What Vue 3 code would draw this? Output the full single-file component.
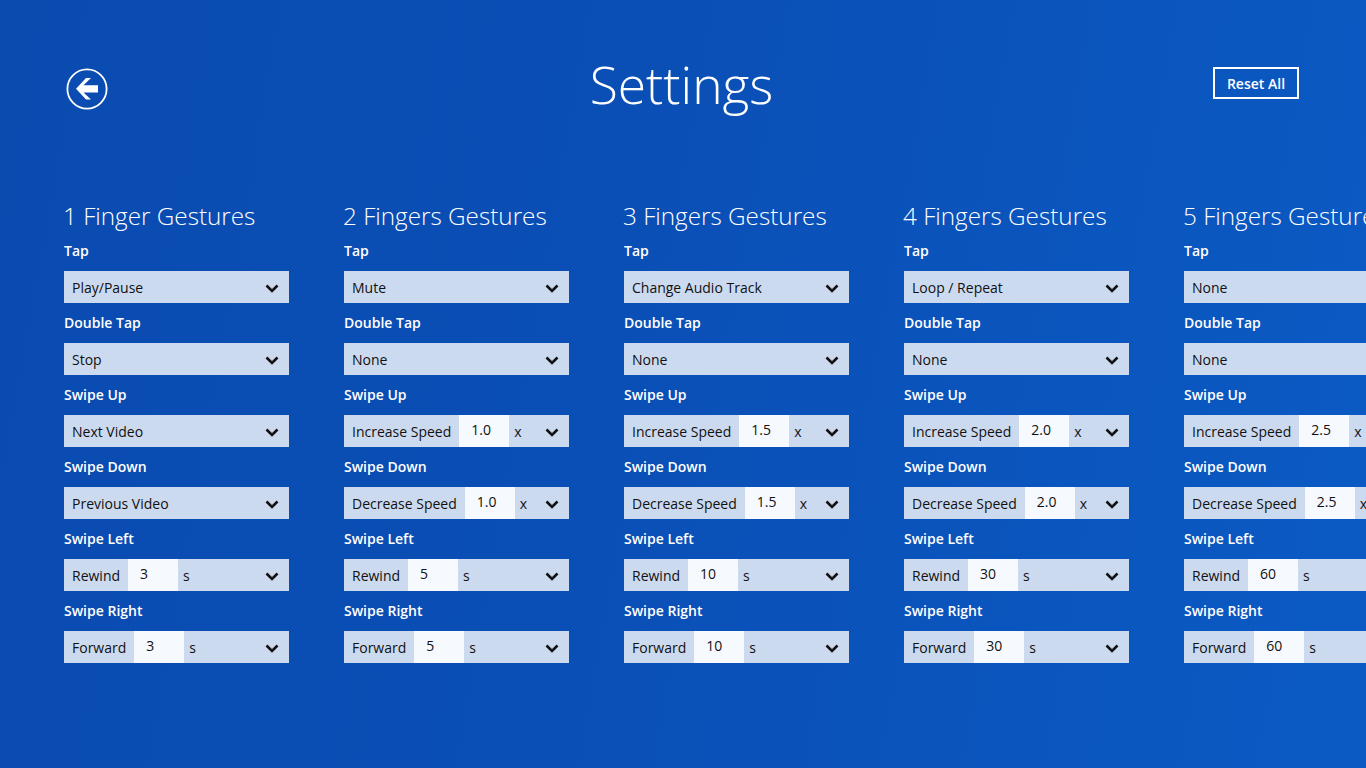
<template>
  <div class="page">
    <header class="top-bar">
      <button class="back-btn" aria-label="Back">
        <svg width="42" height="42" viewBox="0 0 42 42">
          <circle cx="21" cy="21" r="19.6" fill="none" stroke="#fff" stroke-width="1.8" />
          <path d="M10 20.8 L20 10 L25 10 L17.5 17.2 H32 V24.5 H17.5 L25 31.5 L20 31.5 Z" fill="#fff" />
        </svg>
      </button>
      <h1 class="title">Settings</h1>
      <button class="reset-btn">Reset All</button>
    </header>

    <main class="columns">
      <section v-for="col in columns" :key="col.title" class="column">
        <h2 class="column-title">{{ col.title }}</h2>
        <div v-for="row in col.rows" :key="row.gesture" class="field">
          <div class="field-label">{{ row.gesture }}</div>
          <div class="select">
            <span class="select-text">{{ row.action }}</span>
            <span v-if="row.value" class="select-input">{{ row.value }}</span>
            <span v-if="row.unit" class="select-unit">{{ row.unit }}</span>
            <svg class="chevron" width="14" height="9" viewBox="0 0 14 9">
              <path d="M1.5 1.5 L7 7 L12.5 1.5" fill="none" stroke="#111" stroke-width="2.6" />
            </svg>
          </div>
        </div>
      </section>
    </main>
  </div>
</template>

<script setup>
const gestures = ['Tap', 'Double Tap', 'Swipe Up', 'Swipe Down', 'Swipe Left', 'Swipe Right'];

const makeRows = (list) =>
  list.map((item, i) => ({ gesture: gestures[i], ...item }));

const speedAndSkip = (tap, speed, secs) => [
  { action: tap },
  { action: 'None' },
  { action: 'Increase Speed', value: speed, unit: 'x' },
  { action: 'Decrease Speed', value: speed, unit: 'x' },
  { action: 'Rewind', value: secs, unit: 's' },
  { action: 'Forward', value: secs, unit: 's' },
];

const columns = [
  {
    title: '1 Finger Gestures',
    rows: makeRows([
      { action: 'Play/Pause' },
      { action: 'Stop' },
      { action: 'Next Video' },
      { action: 'Previous Video' },
      { action: 'Rewind', value: '3', unit: 's' },
      { action: 'Forward', value: '3', unit: 's' },
    ]),
  },
  { title: '2 Fingers Gestures', rows: makeRows(speedAndSkip('Mute', '1.0', '5')) },
  { title: '3 Fingers Gestures', rows: makeRows(speedAndSkip('Change Audio Track', '1.5', '10')) },
  { title: '4 Fingers Gestures', rows: makeRows(speedAndSkip('Loop / Repeat', '2.0', '30')) },
  { title: '5 Fingers Gestures', rows: makeRows(speedAndSkip('None', '2.5', '60')) },
];
</script>

<style>
html,
body {
  margin: 0;
  overflow: hidden;
}
</style>

<style scoped>
.page {
  width: 1366px;
  height: 768px;
  overflow: hidden;
  box-sizing: border-box;
  padding: 0 0 0 64px;
  background: linear-gradient(100deg, #0a4bb0 0%, #0a4fb6 45%, #0b5ac4 100%);
  color: #fff;
  font-family: "Open Sans", "Noto Sans", sans-serif;
}

.top-bar {
  height: 200px;
  width: 1235px;
  display: grid;
  grid-template-columns: 1fr auto 1fr;
  align-items: start;
}

.back-btn {
  margin: 68px 0 0 2px;
  padding: 0;
  width: 42px;
  height: 42px;
  background: none;
  border: none;
  line-height: 0;
}

.title {
  margin: 47px 0 0;
  font-size: 51.5px;
  line-height: 74px;
  font-weight: 300;
}

.reset-btn {
  justify-self: end;
  margin-top: 67px;
  width: 86px;
  height: 32px;
  box-sizing: border-box;
  background: none;
  border: 2px solid #fff;
  color: #fff;
  font-family: inherit;
  font-size: 14px;
  font-weight: 600;
  padding: 0;
}

.columns {
  display: flex;
  gap: 55px;
}

.column {
  flex: 0 0 225px;
}

.column-title {
  margin: 0 0 0 -1px;
  font-size: 24.25px;
  line-height: 31px;
  font-weight: 300;
  white-space: nowrap;
}

.field-label {
  height: 40px;
  line-height: 40px;
  font-size: 14px;
  font-weight: 600;
}

.select {
  display: flex;
  align-items: center;
  height: 32px;
  background: #ccdaf0;
  color: #111;
  font-size: 14px;
  position: relative;
}

.select-text {
  padding: 0 8px;
  white-space: nowrap;
}

.select-input {
  width: 50px;
  height: 32px;
  line-height: 30px;
  box-sizing: border-box;
  padding-left: 12px;
  background: #f6f9fe;
}

.select-unit {
  margin-left: 5px;
}

.chevron {
  position: absolute;
  right: 10px;
  top: 13px;
}
</style>
